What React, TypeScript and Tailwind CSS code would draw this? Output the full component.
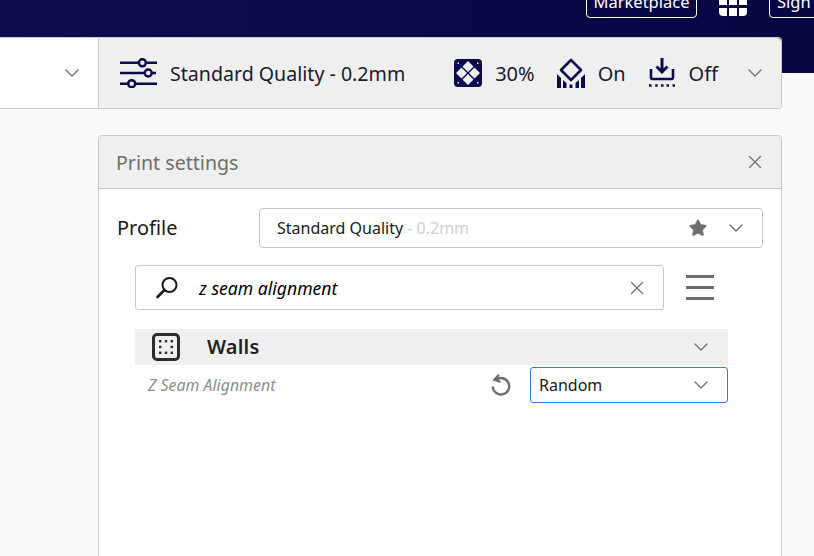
import React from 'react';
import { ChevronDown, X, Star } from 'lucide-react';

const navy = '#0c0a4a';

function SlidersIcon() {
  return (
    <svg width="37" height="30" viewBox="0 0 38 30" fill="none" stroke={navy} strokeWidth="2.6">
      <path d="M0 4.5h19M27 4.5h11M0 15h25M33 15h4M0 26h8M16 26h22" />
      <circle cx="23" cy="4.5" r="3.6" />
      <circle cx="29" cy="15" r="3.6" />
      <circle cx="12" cy="26" r="3.6" />
    </svg>
  );
}

function InfillIcon() {
  return (
    <svg width="28" height="28" viewBox="0 0 28 28">
      <rect width="28" height="28" rx="4" fill={navy} />
      <path
        d="M14 2l5.500 5.500L14 13 8.500 7.500zM14 15l5.500 5.500L14 26l-5.500-5.500zM7.500 8.500L13 14l-5.500 5.500L2 14zM20.500 8.500L26 14l-5.500 5.500L15 14z"
        fill="#efefef"
      />
      <g fill="#efefef">
        <rect x="3.500" y="3.500" width="1.500" height="1.500" />
        <rect x="23" y="3.500" width="1.500" height="1.500" />
        <rect x="3.500" y="23" width="1.500" height="1.500" />
        <rect x="23" y="23" width="1.500" height="1.500" />
      </g>
    </svg>
  );
}

function SupportIcon() {
  return (
    <svg width="28" height="30" viewBox="0 0 28 30" fill="none">
      <path d="M14 2l10 10-10 10L4 12z" stroke={navy} strokeWidth="2.600" strokeLinejoin="round" />
      <path d="M0 16l4 4v10H0zM6 22l3.500 3v5H6zM12.500 26.500h3V30h-3zM18.500 25l3.500-3v8h-3.500zM24 20l4-4v14h-4z" fill={navy} />
    </svg>
  );
}

function AdhesionIcon() {
  return (
    <svg width="28" height="30" viewBox="0 0 28 30" fill="none">
      <path d="M14 0v13M8.500 8.500l5.500 5.500 5.500-5.500" stroke={navy} strokeWidth="3" />
      <path d="M3 11v8.500a1.500 1.500 0 0 0 1.500 1.500h19a1.500 1.500 0 0 0 1.500-1.500V11" stroke={navy} strokeWidth="2.600" />
      <path d="M1 27.500h2.500M7.200 27.500h2.500M13 27.500h2.500M18.500 27.500h2.500M24.500 27.500H27" stroke={navy} strokeWidth="2.600" />
    </svg>
  );
}

function WallsIcon() {
  return (
    <svg width="28" height="28" viewBox="0 0 28 28" fill="none">
      <rect x="1.500" y="1.500" width="25" height="25" rx="3.500" stroke="#2b2b2b" strokeWidth="3" />
      <g fill="#2b2b2b">
        <rect x="7" y="7" width="2.400" height="2.400" />
        <rect x="12.800" y="7" width="2.400" height="2.400" />
        <rect x="18.600" y="7" width="2.400" height="2.400" />
        <rect x="7" y="12.800" width="2.400" height="2.400" />
        <rect x="18.600" y="12.800" width="2.400" height="2.400" />
        <rect x="7" y="18.600" width="2.400" height="2.400" />
        <rect x="12.800" y="18.600" width="2.400" height="2.400" />
        <rect x="18.600" y="18.600" width="2.400" height="2.400" />
      </g>
    </svg>
  );
}

function SearchIcon() {
  return (
    <svg width="24" height="24" viewBox="0 0 24 24" fill="none" stroke="#1a1a1a">
      <circle cx="14.500" cy="9" r="7" strokeWidth="2" />
      <path d="M9.500 14L2.500 21" strokeWidth="2.600" strokeLinecap="round" />
    </svg>
  );
}

function ResetIcon() {
  return (
    <svg width="20" height="22" viewBox="0 0 20 22" fill="none" stroke="#6e6e6e" strokeWidth="2.400">
      <path d="M4.500 6.200A8.200 8.200 0 1 1 1.800 12.500" />
      <path d="M8 0.800L3.500 5.800l6 2" />
    </svg>
  );
}

function Chevron({ className = '' }: { className?: string }) {
  return <ChevronDown size={24} strokeWidth={1.3} className={`text-[#6e6e6e] ${className}`} />;
}

function Stat({ icon, label }: { icon: React.ReactNode; label: string }) {
  return (
    <div className="flex items-center gap-[13px]">
      {icon}
      <span className="pt-[2px] text-[20px] leading-[28px] text-[#1a1a2e]">{label}</span>
    </div>
  );
}

export default function App() {
  return (
    <div
      className="h-[556px] w-[814px] overflow-hidden bg-[#fafafa] text-[#1a1a1a]"
      style={{ fontFamily: '"Noto Sans", sans-serif' }}
    >
      {/* Header */}
      <div className="h-[73px] overflow-hidden bg-gradient-to-r from-[#0d0d4d] to-[#080744]">
        <div className="-mt-[14px] flex items-start pl-[586px] text-white">
          <div className="flex h-[32px] w-[111px] shrink-0 items-center justify-center rounded-[4px] border border-white text-[16.5px]">
            Marketplace
          </div>
          <div className="ml-[22px] grid shrink-0 grid-cols-3 gap-x-[2px] gap-y-[3px] pt-[11px]">
            <div className="h-[8px] w-[8px] bg-white" />
            <div className="h-[8px] w-[8px] bg-white" />
            <div className="h-[8px] w-[8px] bg-white" />
            <div className="h-[8px] w-[8px] rounded-bl-[4px] bg-white" />
            <div className="h-[8px] w-[8px] bg-white" />
            <div className="h-[8px] w-[8px] rounded-br-[4px] bg-white" />
          </div>
          <div className="ml-[22px] flex h-[32px] w-[70px] shrink-0 items-center rounded-l-[4px] border border-white pl-[7px] text-[16.5px]">
            Sign
          </div>
        </div>
      </div>

      {/* Toolbar */}
      <div className="-mt-[36px] relative flex h-[72px] w-[782px] rounded-r-[4px] border border-l-0 border-[#c8c8c8]">
        <div className="flex w-[99px] items-center justify-end border-r border-[#c8c8c8] bg-white pr-[14px]">
          <Chevron />
        </div>
        <div className="flex flex-1 items-center rounded-r-[4px] bg-[#efefef] pl-[21px] pr-[14px]">
          <SlidersIcon />
          <span className="ml-[13px] pt-[2px] text-[19.6px] leading-[28px] text-[#1a1a2e]">Standard Quality - 0.2mm</span>
          <div className="ml-auto flex items-center gap-[22px]">
            <Stat icon={<InfillIcon />} label="30%" />
            <Stat icon={<SupportIcon />} label="On" />
            <Stat icon={<AdhesionIcon />} label="Off" />
            <Chevron className="ml-[3px]" />
          </div>
        </div>
      </div>

      {/* Print settings panel */}
      <div className="ml-[98px] mt-[26px] h-[500px] w-[684px] rounded-t-[4px] border border-[#c8c8c8] bg-white">
        <div className="flex h-[53px] items-center justify-between rounded-t-[4px] border-b border-[#c8c8c8] bg-[#efefef] pl-[17px] pr-[15px]">
          <span className="pt-[1px] text-[19.6px] text-[#6e6e6e]">Print settings</span>
          <X size={22} strokeWidth={1.4} className="text-[#6e6e6e]" />
        </div>

        <div className="mt-[19px] flex items-center pl-[18px] pr-[18px]">
          <span className="w-[142px] text-[20px] leading-[28px]">Profile</span>
          <div className="flex h-[40px] flex-1 items-center rounded-[4px] border border-[#c8c8c8] pl-[17px] pr-[14px]">
            <span className="text-[16px]">
              Standard Quality<span className="text-[#cfcfcf]"> - 0.2mm</span>
            </span>
            <Star size={20} fill="#6e6e6e" strokeWidth={1} className="ml-auto text-[#6e6e6e]" />
            <Chevron className="ml-[16px]" />
          </div>
        </div>

        <div className="mt-[17px] flex items-center pl-[36px]">
          <div className="flex h-[45px] w-[529px] shrink-0 items-center rounded-[3px] border border-[#c8c8c8] pl-[19px] pr-[15px]">
            <SearchIcon />
            <span className="ml-[20px] pt-[1px] text-[17.6px] italic text-black">z seam alignment</span>
            <X size={22} strokeWidth={1.4} className="ml-auto text-[#6e6e6e]" />
          </div>
          <div className="ml-[22px] flex w-[28px] shrink-0 flex-col gap-[8px]">
            <div className="h-[3px] bg-[#6e6e6e]" />
            <div className="h-[3px] bg-[#6e6e6e]" />
            <div className="h-[3px] bg-[#6e6e6e]" />
          </div>
        </div>

        <div className="ml-[36px] mt-[19px] w-[593px]">
          <div className="flex h-[36px] items-center bg-[#efefef] pl-[17px] pr-[15px]">
            <WallsIcon />
            <span className="ml-[27px] text-[20px] font-semibold tracking-[0.2px] text-[#1f1f1f]">Walls</span>
            <Chevron className="ml-auto" />
          </div>
          <div className="mt-[2px] flex h-[36px] items-center pl-[13px]">
            <span className="pt-[1px] text-[15.9px] italic text-[#8e8e8e]">Z Seam Alignment</span>
            <div className="ml-auto mr-[19px]">
              <ResetIcon />
            </div>
            <div className="flex h-[36px] w-[198px] items-center justify-between rounded-[3px] border border-[#2f7de1] pl-[8px] pr-[14px]">
              <span className="text-[16px]">Random</span>
              <Chevron />
            </div>
          </div>
        </div>
      </div>
    </div>
  );
}
